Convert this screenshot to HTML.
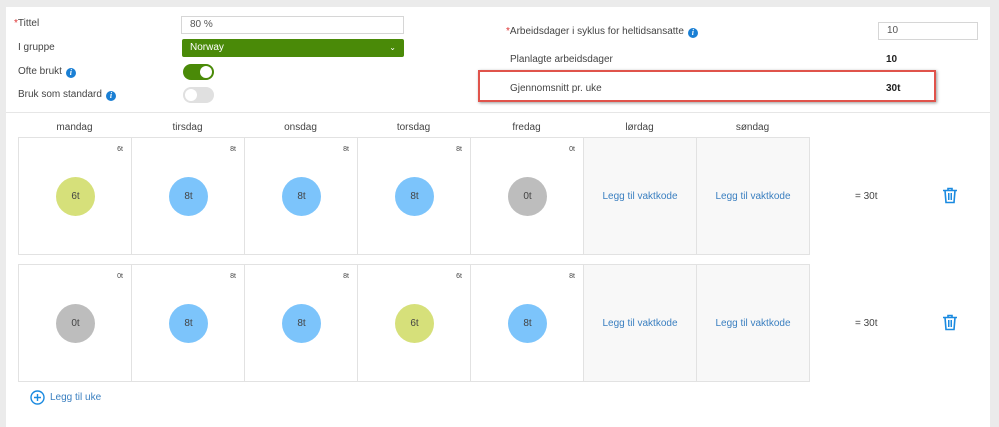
<!DOCTYPE html>
<html><head><meta charset="utf-8"><style>
*{margin:0;padding:0;box-sizing:border-box}
body{width:999px;height:419px;background:#ebebeb;font-family:"Liberation Sans",sans-serif;font-size:10px;color:#444;position:relative;overflow:hidden}
.panel{position:absolute;left:6px;top:7px;width:984px;height:420px;background:#fff}
.a{position:absolute;white-space:nowrap}
.inp{position:absolute;border:1px solid #d6d6d6;background:#fff;padding:0 8px;line-height:16px;color:#555}
.info{display:inline-block;width:10px;height:10px;border-radius:50%;background:#1a7fd4;color:#fff;font-size:8px;font-weight:bold;font-style:italic;text-align:center;line-height:10px;vertical-align:-1px;margin-left:4px;font-family:"Liberation Serif",serif}
.cell{position:absolute;width:114px;height:118px;border:1px solid #e2e2e2;background:#fff}
.cell.e{background:#f8f8f8}
.cell .s{position:absolute;right:8px;top:8px;font-size:7px;color:#444}
.cell .c{position:absolute;left:37px;top:39px;width:39px;height:39px;border-radius:50%;text-align:center;line-height:39px;font-size:10px;color:#444}
.cell .l{position:absolute;left:0;right:0;top:53px;text-align:center;color:#3a7fc0;font-size:10px}
.g{background:#d6e07a}.b{background:#7cc4fb}.gr{background:#bdbdbd}
.day{position:absolute;top:122px;width:113px;text-align:center;font-size:10px;color:#444}
</style></head><body>
<div class="panel"></div>
<div class="a" style="left:14px;top:18px"><span style="color:#d33">*</span>Tittel</div>
<div class="inp" style="left:181px;top:16px;width:223px;height:18px">80 %</div>
<div class="a" style="left:18px;top:42px">I gruppe</div>
<div class="a" style="left:182px;top:39px;width:222px;height:18px;background:#4a8a08;border-radius:2px;color:#fff;padding-left:8px;line-height:18px">Norway<span style="position:absolute;right:8px;font-size:8px">⌄</span></div>
<div class="a" style="left:18px;top:66px">Ofte brukt<span class="info">i</span></div>
<div class="a" style="left:183px;top:64px;width:31px;height:16px;border-radius:8px;background:#4a8a08"><div style="position:absolute;right:2px;top:2px;width:12px;height:12px;border-radius:50%;background:#fff"></div></div>
<div class="a" style="left:18px;top:89px">Bruk som standard<span class="info">i</span></div>
<div class="a" style="left:183px;top:87px;width:31px;height:16px;border-radius:8px;background:#e0e0e0"><div style="position:absolute;left:2px;top:2px;width:12px;height:12px;border-radius:50%;background:#fff"></div></div>
<div class="a" style="left:506px;top:26px"><span style="color:#d33">*</span>Arbeidsdager i syklus for heltidsansatte<span class="info">i</span></div>
<div class="inp" style="left:878px;top:22px;width:100px;height:18px">10</div>
<div class="a" style="left:510px;top:54px">Planlagte arbeidsdager</div>
<div class="a" style="left:886px;top:54px;font-weight:bold;color:#222">10</div>
<div class="a" style="left:478px;top:70px;width:458px;height:32px;border:2px solid #e0534b;box-shadow:1px 1px 3px rgba(0,0,0,.4)"></div>
<div class="a" style="left:510px;top:83px">Gjennomsnitt pr. uke</div>
<div class="a" style="left:886px;top:83px;font-weight:bold;color:#222">30t</div>
<div class="a" style="left:6px;top:112px;width:984px;height:1px;background:#e6e6e6"></div>
<div class="day" style="left:18px">mandag</div><div class="day" style="left:131px">tirsdag</div><div class="day" style="left:244px">onsdag</div><div class="day" style="left:357px">torsdag</div><div class="day" style="left:470px">fredag</div><div class="day" style="left:583px">lørdag</div><div class="day" style="left:696px">søndag</div>

<div class="cell" style="left:18px;top:137px"><span class="s">6t</span><div class="c g">6t</div></div>
<div class="cell" style="left:131px;top:137px"><span class="s">8t</span><div class="c b">8t</div></div>
<div class="cell" style="left:244px;top:137px"><span class="s">8t</span><div class="c b">8t</div></div>
<div class="cell" style="left:357px;top:137px"><span class="s">8t</span><div class="c b">8t</div></div>
<div class="cell" style="left:470px;top:137px"><span class="s">0t</span><div class="c gr">0t</div></div>
<div class="cell e" style="left:583px;top:137px"><div class="l">Legg til vaktkode</div></div>
<div class="cell e" style="left:696px;top:137px"><div class="l">Legg til vaktkode</div></div>
<div class="a" style="left:855px;top:191px">= 30t</div>

<div class="cell" style="left:18px;top:264px"><span class="s">0t</span><div class="c gr">0t</div></div>
<div class="cell" style="left:131px;top:264px"><span class="s">8t</span><div class="c b">8t</div></div>
<div class="cell" style="left:244px;top:264px"><span class="s">8t</span><div class="c b">8t</div></div>
<div class="cell" style="left:357px;top:264px"><span class="s">6t</span><div class="c g">6t</div></div>
<div class="cell" style="left:470px;top:264px"><span class="s">8t</span><div class="c b">8t</div></div>
<div class="cell e" style="left:583px;top:264px"><div class="l">Legg til vaktkode</div></div>
<div class="cell e" style="left:696px;top:264px"><div class="l">Legg til vaktkode</div></div>
<div class="a" style="left:855px;top:318px">= 30t</div>

<svg class="a" style="left:942px;top:187px" width="16" height="17" viewBox="0 0 16 17" fill="none" stroke="#1a8ae0" stroke-width="1.6"><path d="M1 3.5h14M6 3.5V1.5h4v2M3 3.5l1 12h8l1-12"/><path d="M6.5 6v7M8 6v7M9.5 6v7" stroke-width="1"/></svg>
<svg class="a" style="left:942px;top:314px" width="16" height="17" viewBox="0 0 16 17" fill="none" stroke="#1a8ae0" stroke-width="1.6"><path d="M1 3.5h14M6 3.5V1.5h4v2M3 3.5l1 12h8l1-12"/><path d="M6.5 6v7M8 6v7M9.5 6v7" stroke-width="1"/></svg>

<svg class="a" style="left:30px;top:390px" width="15" height="15" viewBox="0 0 15 15" fill="none" stroke="#1a8ae0" stroke-width="1.4"><circle cx="7.5" cy="7.5" r="6.5"/><path d="M7.5 4v7M4 7.5h7"/></svg>
<div class="a" style="left:50px;top:392px;color:#3a7fc0">Legg til uke</div>
</body></html>
